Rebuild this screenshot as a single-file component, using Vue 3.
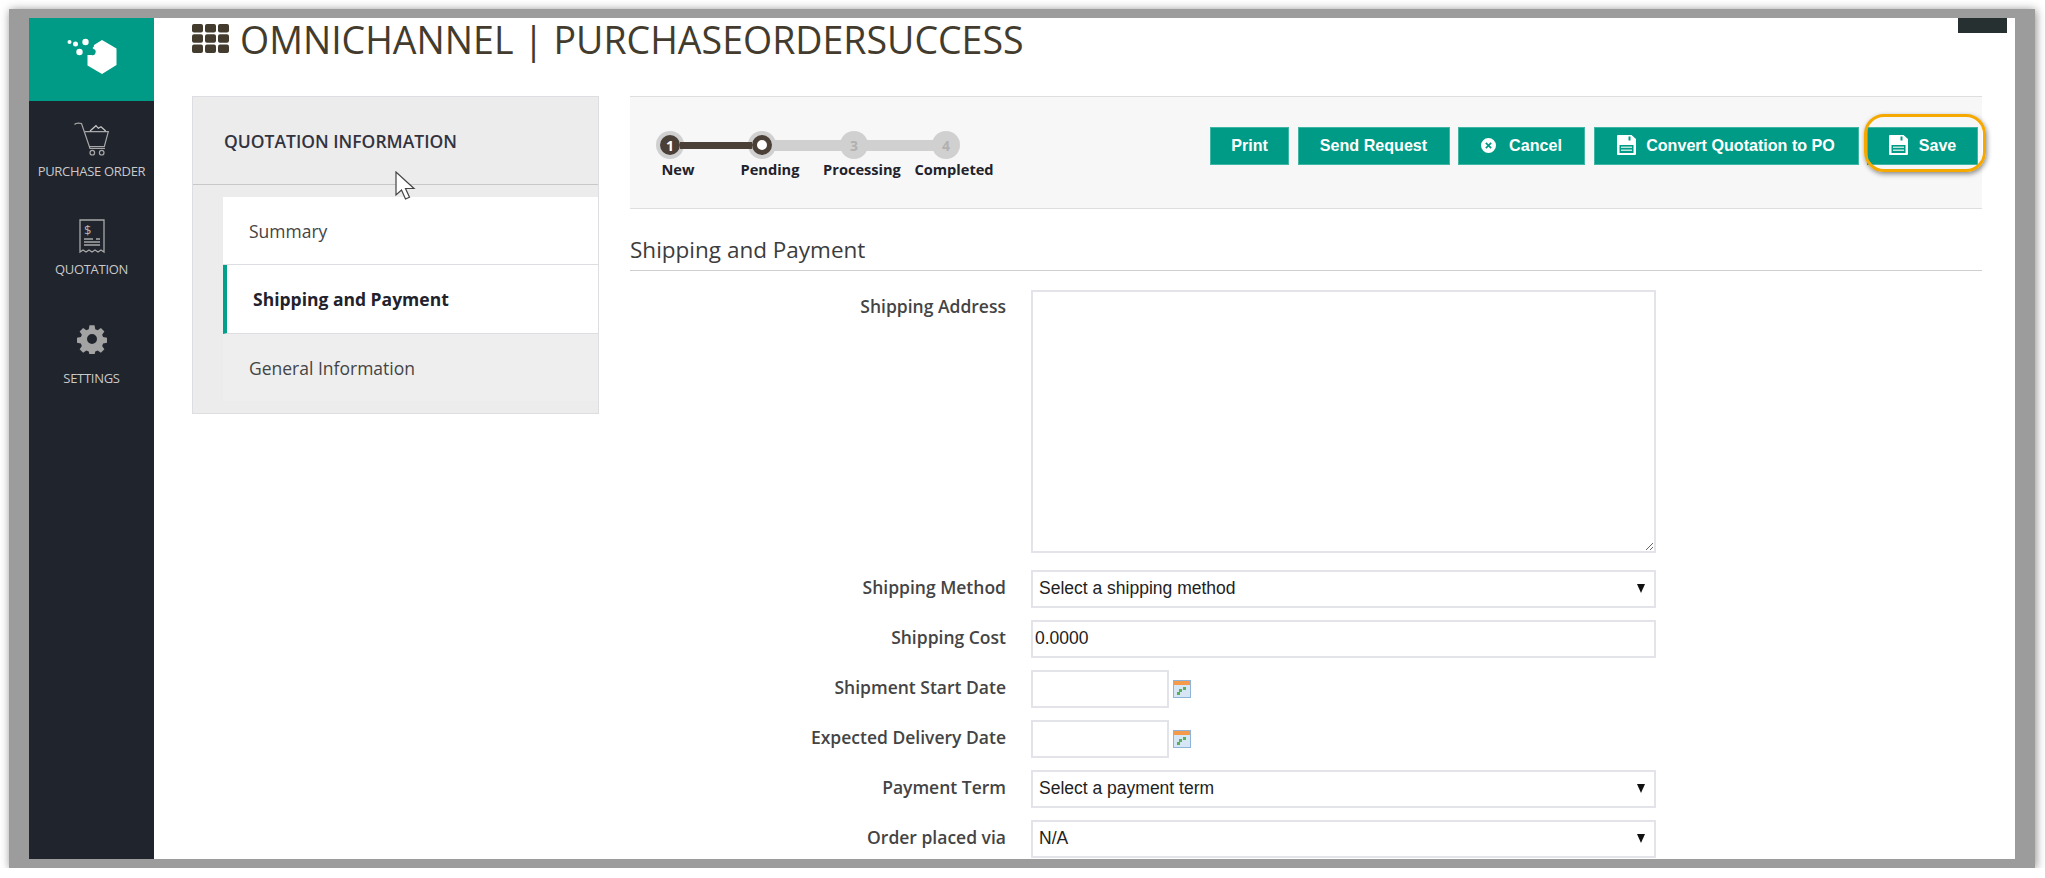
<template>
  <div class="shot">
    <div class="window">
      <aside class="sidebar">
        <div class="brand">
          <svg width="56" height="42" viewBox="0 0 56 42">
            <path fill="#fff" d="M36 4l14.500 8.500V29L36 38l-14.500-8.500V19h4a3 3 0 0 0 2-6l-1-1a3 3 0 0 0 1.500-3z" />
            <circle cx="3.500" cy="6" r="2" fill="#fff" />
            <circle cx="9.500" cy="8" r="2.500" fill="#fff" />
            <circle cx="19.500" cy="6" r="3.200" fill="#fff" />
            <circle cx="13.500" cy="16" r="3.200" fill="#fff" />
          </svg>
        </div>
        <nav class="nav">
          <a class="nav-item nav-po">
            <svg width="36" height="36" viewBox="0 0 36 36" fill="none" stroke="#a8a8a8" stroke-width="1.200">
              <path d="M.5 2.500c1-1.200 4-1.500 7-1l8.500 25h15" />
              <path d="M11 9.700h23.300l-4 15H15" />
              <path d="M16 9l6-5.300 2.300 2.600L27 4.700 31.700 9" stroke="#c8c8c8" />
              <circle cx="18.300" cy="30.700" r="2.300" />
              <circle cx="27.700" cy="30.700" r="2.300" />
            </svg>
            <span>PURCHASE ORDER</span>
          </a>
          <a class="nav-item nav-quote">
            <svg width="26" height="35" viewBox="0 0 26 35" fill="none" stroke="#a8a8a8" stroke-width="1.300">
              <path d="M1 1h24v32l-3-2-3 2-3-2-3 2-3-2-3 2-3-2-3 2z" />
              <path d="M5 20h9M5 23h16M5 26h16M17 20h4" />
              <text x="5" y="16" class="dollar">$</text>
            </svg>
            <span>QUOTATION</span>
          </a>
          <a class="nav-item nav-settings">
            <svg width="30" height="30" viewBox="0 0 24 24">
              <path fill="#a3a3a3" fill-rule="evenodd" d="M10 1h4l.6 3.100 1.900.8 2.600-1.800 2.800 2.800-1.800 2.600.8 1.900 3.100.6v4l-3.100.6-.8 1.900 1.800 2.600-2.800 2.800-2.600-1.800-1.900.8-.6 3.100h-4l-.6-3.100-1.900-.8-2.600 1.800-2.800-2.800 1.800-2.600-.8-1.900-3.100-.6v-4l3.100-.6.8-1.900-1.800-2.600 2.800-2.800 2.600 1.800 1.900-.8zM12 8a4 4 0 1 0 0 8 4 4 0 0 0 0-8z" />
            </svg>
            <span>SETTINGS</span>
          </a>
        </nav>
      </aside>

      <div class="page">
        <header class="page-head">
          <svg class="grid-icon" width="38" height="30" viewBox="0 0 38 30">
            <g fill="#433c2e">
              <rect v-for="c in gridCells" :key="c.x + '-' + c.y" :x="c.x" :y="c.y" width="11" height="8.500" rx="2" />
            </g>
          </svg>
          <h1>OMNICHANNEL | PURCHASEORDERSUCCESS</h1>
          <div class="head-box"></div>
        </header>

        <div class="columns">
          <section class="panel">
            <h2 class="panel-title">QUOTATION INFORMATION</h2>
            <ul class="panel-list">
              <li class="panel-item">Summary</li>
              <li class="panel-item is-active">Shipping and Payment</li>
              <li class="panel-item is-muted">General Information</li>
            </ul>
            <svg class="cursor" width="22" height="30" viewBox="0 0 22 30">
              <path d="M1 1v23l5.500-5 4 9 4-1.800-4-8.700H19z" fill="#fff" stroke="#444" stroke-width="1.200" />
            </svg>
          </section>

          <main class="content">
            <div class="toolbar">
              <div class="stepper">
                <div class="step-track">
                  <template v-for="(s, i) in steps" :key="s.label">
                    <span class="step-dot" :class="'is-' + s.state">{{ s.state === 'current' ? '' : i + 1 }}</span>
                    <span v-if="i < steps.length - 1" class="step-line" :class="{ 'is-done': i === 0 }"></span>
                  </template>
                </div>
                <div class="step-labels">
                  <span v-for="s in steps" :key="s.label">{{ s.label }}</span>
                </div>
              </div>

              <div class="actions">
                <button class="btn btn-print">Print</button>
                <button class="btn btn-send">Send Request</button>
                <button class="btn btn-cancel">
                  <svg width="15" height="15" viewBox="0 0 16 16">
                    <path fill="#fff" fill-rule="evenodd" d="M8 0a8 8 0 1 1 0 16A8 8 0 0 1 8 0zM5.800 4.500L4.500 5.800 6.700 8l-2.200 2.200 1.300 1.300L8 9.300l2.200 2.200 1.300-1.300L9.300 8l2.200-2.200-1.300-1.300L8 6.700z" />
                  </svg>
                  Cancel
                </button>
                <button class="btn btn-convert">
                  <svg width="20" height="20" viewBox="0 0 20 20">
                    <path fill="#fff" fill-rule="evenodd" d="M1 0h13.500L19 4v15a1 1 0 0 1-1 1H1a1 1 0 0 1-1-1V1a1 1 0 0 1 1-1zM11.500 1.500v4h2v-4zM2.500 10v8h14v-8z" />
                    <path fill="#bfe6df" d="M4 11.500h11v1.500H4zM4 14.500h11V16H4z" />
                  </svg>
                  Convert Quotation to PO
                </button>
                <button class="btn btn-save">
                  <svg width="20" height="20" viewBox="0 0 20 20">
                    <path fill="#fff" fill-rule="evenodd" d="M1 0h13.500L19 4v15a1 1 0 0 1-1 1H1a1 1 0 0 1-1-1V1a1 1 0 0 1 1-1zM11.500 1.500v4h2v-4zM2.500 10v8h14v-8z" />
                    <path fill="#bfe6df" d="M4 11.500h11v1.500H4zM4 14.500h11V16H4z" />
                  </svg>
                  Save
                  <span class="highlight"></span>
                </button>
              </div>
            </div>

            <h3 class="section-title">Shipping and Payment</h3>

            <form class="form" @submit.prevent>
              <div class="row row-top">
                <label>Shipping Address</label>
                <textarea class="field area"></textarea>
              </div>
              <div class="row">
                <label>Shipping Method</label>
                <div class="select-wrap">
                  <select class="field select"><option>Select a shipping method</option></select>
                </div>
              </div>
              <div class="row">
                <label>Shipping Cost</label>
                <input class="field plain" value="0.0000" />
              </div>
              <div class="row">
                <label>Shipment Start Date</label>
                <div class="date-wrap">
                  <input class="field date" />
                  <svg class="cal" width="18" height="18" viewBox="0 0 18 18">
                    <rect x=".5" y=".5" width="17" height="17" fill="#d6e6f5" stroke="#8fb4d8" />
                    <rect x="1" y="1" width="16" height="4" fill="#f59a4a" />
                    <rect x="6" y="9" width="3" height="3" fill="#58b058" />
                    <rect x="10" y="7" width="3" height="3" fill="#58b058" />
                    <rect x="4" y="12" width="3" height="3" fill="#58b058" />
                  </svg>
                </div>
              </div>
              <div class="row">
                <label>Expected Delivery Date</label>
                <div class="date-wrap">
                  <input class="field date" />
                  <svg class="cal" width="18" height="18" viewBox="0 0 18 18">
                    <rect x=".5" y=".5" width="17" height="17" fill="#d6e6f5" stroke="#8fb4d8" />
                    <rect x="1" y="1" width="16" height="4" fill="#f59a4a" />
                    <rect x="6" y="9" width="3" height="3" fill="#58b058" />
                    <rect x="10" y="7" width="3" height="3" fill="#58b058" />
                    <rect x="4" y="12" width="3" height="3" fill="#58b058" />
                  </svg>
                </div>
              </div>
              <div class="row">
                <label>Payment Term</label>
                <div class="select-wrap">
                  <select class="field select"><option>Select a payment term</option></select>
                </div>
              </div>
              <div class="row">
                <label>Order placed via</label>
                <div class="select-wrap">
                  <select class="field select"><option>N/A</option></select>
                </div>
              </div>
            </form>
          </main>
        </div>
      </div>
    </div>
  </div>
</template>

<script setup>
const steps = [
  { label: 'New', state: 'done' },
  { label: 'Pending', state: 'current' },
  { label: 'Processing', state: 'todo' },
  { label: 'Completed', state: 'todo' }
];

const gridCells = [];
for (let y = 0; y < 3; y++) {
  for (let x = 0; x < 3; x++) {
    gridCells.push({ x: x * 13, y: y * 10.2 });
  }
}
</script>

<style>
html, body {
  margin: 0;
  background: #fff;
}
</style>

<style scoped>
* {
  box-sizing: border-box;
}
.shot {
  width: 2026px;
  height: 859px;
  margin: 9px 0 0 9px;
  padding: 9px 20px;
  background: #9c9c9c;
  box-shadow: 1px 1px 9px rgba(0, 0, 0, 0.45);
  font-family: "Open Sans", sans-serif;
}
.window {
  display: flex;
  height: 841px;
  background: #fff;
}

/* sidebar */
.sidebar {
  width: 125px;
  flex: none;
  background: #20242d;
}
.brand {
  height: 83px;
  background: #009b86;
  display: flex;
  justify-content: center;
  padding: 18px 0 0 4px;
}
.nav-item {
  display: flex;
  flex-direction: column;
  align-items: center;
  color: #c9c9c9;
  font-size: 13px;
  letter-spacing: -0.3px;
  line-height: 18px;
}
.nav-po {
  padding-top: 21px;
}
.nav-po span {
  margin-top: 4px;
}
.nav-quote {
  padding-top: 39px;
}
.nav-quote span {
  margin-top: 6px;
}
.nav-settings {
  padding-top: 46px;
}
.nav-settings span {
  margin-top: 15px;
}
.dollar {
  font-size: 13px;
  fill: #b5b5b5;
  stroke: none;
  font-family: "Open Sans", sans-serif;
}

/* page */
.page {
  flex: 1;
  min-width: 0;
  padding: 0 33px 0 38px;
}
.page-head {
  height: 78px;
  display: flex;
  align-items: flex-start;
  gap: 10px;
  position: relative;
}
.grid-icon {
  margin-top: 6px;
}
.page-head h1 {
  margin: -4px 0 0;
  font-size: 37.500px;
  font-weight: 400;
  line-height: 52px;
  color: #433c2e;
  white-space: nowrap;
}
.head-box {
  position: absolute;
  top: 0;
  right: -25px;
  width: 49px;
  height: 15px;
  background: #263030;
}
.columns {
  display: flex;
  gap: 31px;
  align-items: flex-start;
}

/* left panel */
.panel {
  position: relative;
  width: 407px;
  flex: none;
  height: 318px;
  background: #ececec;
  border: 1px solid #dcdee2;
}
.panel-title {
  margin: 0;
  height: 88px;
  padding: 0 0 0 31px;
  border-bottom: 1px solid #c8c8c8;
  font-size: 17.500px;
  font-weight: 600;
  line-height: 88px;
  color: #33333f;
}
.panel-list {
  list-style: none;
  margin: 12px 0 0 30px;
  padding: 0;
}
.panel-item {
  height: 68px;
  padding-left: 26px;
  background: #fff;
  border-bottom: 1px solid #dcdee2;
  font-size: 17.500px;
  line-height: 68px;
  color: #444;
}
.panel-item.is-active {
  height: 69px;
  border-left: 4px solid #00a08a;
  font-weight: 700;
  color: #22222c;
}
.panel-item.is-muted {
  height: 67px;
  background: #eee;
  border-bottom: 0;
}
.cursor {
  position: absolute;
  left: 202px;
  top: 74px;
}

/* toolbar */
.content {
  flex: 1;
  min-width: 0;
}
.toolbar {
  height: 113px;
  display: flex;
  justify-content: space-between;
  padding: 0 4px 0 2px;
  background: #f7f7f7;
  border-top: 1px solid #dedede;
  border-bottom: 1px solid #dedede;
}
.step-track {
  display: flex;
  align-items: center;
  margin: 34px 0 0 24px;
  height: 28px;
}
.step-dot {
  position: relative;
  isolation: isolate;
  width: 28px;
  height: 28px;
  flex: none;
  border-radius: 50%;
  background: #d0d0d0;
  color: #b0b0b0;
  font-size: 14px;
  font-weight: 700;
  line-height: 30px;
  text-align: center;
}
.step-dot.is-done {
  color: #fff;
}
.step-dot.is-done::before {
  content: "";
  position: absolute;
  inset: 4px;
  border-radius: 50%;
  background: #4a4038;
  z-index: -1;
}
.step-dot.is-current::before {
  content: "";
  position: absolute;
  inset: 4px;
  border-radius: 50%;
  background: #fff;
  border: 5px solid #4a4038;
}
.step-line {
  position: relative;
  width: 72px;
  height: 11px;
  margin: 0 -4px;
  background: #d0d0d0;
}
.step-line.is-done {
  z-index: 1;
  background: transparent;
}
.step-line.is-done::before {
  content: "";
  position: absolute;
  left: 0;
  right: 0;
  top: 2px;
  height: 7px;
  background: #4a4038;
}
.step-labels {
  display: grid;
  grid-template-columns: repeat(4, 92px);
  margin-top: -1px;
  font-size: 14.600px;
  font-weight: 700;
  line-height: 22px;
  color: #22222c;
  text-align: center;
}
.actions {
  display: flex;
  gap: 8.5px;
  padding-top: 30px;
}
.btn {
  position: relative;
  height: 38px;
  display: flex;
  align-items: center;
  justify-content: center;
  border: 1px solid #3fb5a3;
  background: #009b86;
  color: #fff;
  font-family: "Liberation Sans", Arial, sans-serif;
  font-size: 16.100px;
  font-weight: 700;
  padding: 0 0 2px;
}
.btn-print {
  width: 79px;
}
.btn-send {
  width: 152px;
}
.btn-cancel {
  width: 127px;
  gap: 13px;
}
.btn-convert {
  width: 265px;
  gap: 9px;
}
.btn-save {
  width: 111px;
  gap: 10px;
}
.highlight {
  position: absolute;
  inset: -14px -9px -8px -4px;
  border: 3px solid #f5a800;
  border-radius: 20px;
  box-shadow: 1px 2px 5px rgba(0, 0, 0, 0.45);
}

/* form */
.section-title {
  margin: 0;
  height: 62px;
  padding-top: 26px;
  border-bottom: 1px solid #cfcfcf;
  font-size: 22.500px;
  font-weight: 400;
  line-height: 30px;
  color: #3c3c3c;
}
.form {
  display: flex;
  flex-direction: column;
  gap: 12px;
  margin-top: 19px;
}
.row {
  display: grid;
  grid-template-columns: 376px 625px;
  column-gap: 25px;
  align-items: start;
  height: 38px;
}
.row-top {
  height: 263px;
  margin-bottom: 5px;
}
.row label {
  text-align: right;
  font-size: 17.500px;
  font-weight: 600;
  line-height: 34px;
  color: #444;
}
.row-top label {
  line-height: 32px;
}
.field {
  display: block;
  width: 100%;
  height: 38px;
  border: 2px solid #e2e4e9;
  background: #fff;
  color: #222;
  font-family: "Liberation Sans", Arial, sans-serif;
  font-size: 17.500px;
  outline: none;
  border-radius: 0;
}
.area {
  height: 263px;
  resize: vertical;
}
.plain {
  padding: 0 2px 1px;
}
.select {
  appearance: none;
  padding: 0 6px 2px;
}
.select-wrap {
  position: relative;
}
.select-wrap::after {
  content: "";
  position: absolute;
  right: 11px;
  top: 14px;
  border-left: 4px solid transparent;
  border-right: 4px solid transparent;
  border-top: 9px solid #111;
  pointer-events: none;
}
.date-wrap {
  display: flex;
  align-items: center;
  gap: 4px;
}
.date {
  width: 138px;
  flex: none;
}
</style>
